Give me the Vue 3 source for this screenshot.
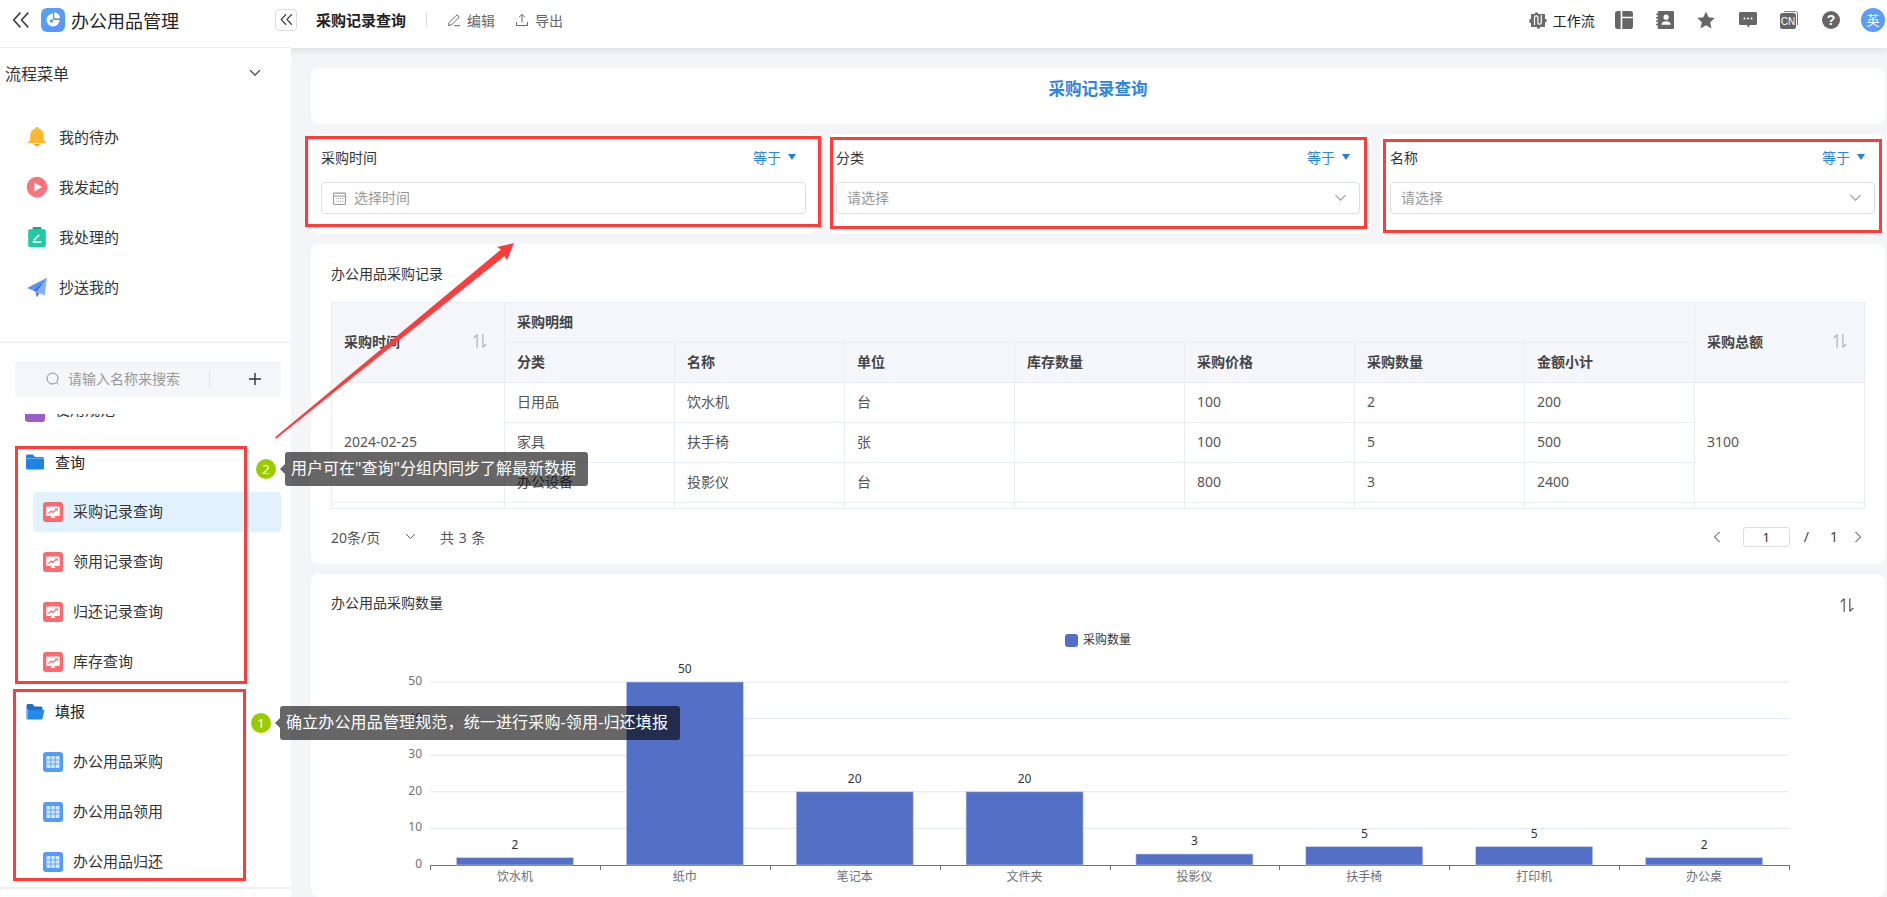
<script setup>
const menu = [
  { icon: 'i-bell', label: '我的待办' },
  { icon: 'i-play', label: '我发起的' },
  { icon: 'i-clip', label: '我处理的' },
  { icon: 'i-plane', label: '抄送我的' },
]
const queryItems = ['采购记录查询', '领用记录查询', '归还记录查询', '库存查询']
const fillItems = ['办公用品采购', '办公用品领用', '办公用品归还']
const topIcons = ['t-layout', 't-book', 't-star', 't-chat', 't-cn', 't-help']
const filters = [
  { label: '采购时间', placeholder: '选择时间', kind: 'date', cls: 'f-side' },
  { label: '分类', placeholder: '请选择', kind: 'select', cls: 'f-mid' },
  { label: '名称', placeholder: '请选择', kind: 'select', cls: 'f-side' },
]
const subHeads = ['分类', '名称', '单位', '库存数量', '采购价格', '采购数量', '金额小计']
const rows = [
  ['日用品', '饮水机', '台', '', '100', '2', '200'],
  ['家具', '扶手椅', '张', '', '100', '5', '500'],
  ['办公设备', '投影仪', '台', '', '800', '3', '2400'],
]
const y0 = 865
const unit = 183 / 50
const ticks = [0, 10, 20, 30, 40, 50].map((v) => ({ v, y: y0 - v * unit }))
const names = [
  ['饮水机', 2], ['纸巾', 50], ['笔记本', 20], ['文件夹', 20],
  ['投影仪', 3], ['扶手椅', 5], ['打印机', 5], ['办公桌', 2],
]
const step = 1359 / 8
const bars = names.map(([name, v], i) => ({
  name, v, cx: 430 + step * (i + 0.5), top: y0 - v * unit, h: v * unit,
}))
const tickX = Array.from({ length: 9 }, (_, i) => Math.round(430 + step * i) + 0.5)
</script>

<template>
  <div class="page">
    <svg class="defs" aria-hidden="true">
      <symbol id="i-bell" viewBox="0 0 20 20">
        <path fill="#fdb82e" d="M10 .8c.9 0 1.500.6 1.600 1.500 2.900.7 4.600 3.200 4.600 6.200v4.300l2.400 2.700H1.400l2.400-2.700V8.500c0-3 1.700-5.500 4.600-6.200C8.500 1.400 9.100.8 10 .8z"/>
        <path fill="#f59a23" d="M7.400 16.300h5.200a2.700 2.700 0 0 1-5.200 0z"/>
      </symbol>
      <symbol id="i-play" viewBox="0 0 20 20">
        <circle cx="10" cy="10" r="9.400" fill="#f9747c"/>
        <path fill="#fff" d="M7.600 5.800l7 4.200-7 4.200z"/>
      </symbol>
      <symbol id="i-clip" viewBox="0 0 20 20">
        <rect x="6" y="1" width="8" height="4" rx="1" fill="#14a888"/>
        <rect x="2" y="3" width="16" height="16" rx="1.500" fill="#1ecba2"/>
        <path stroke="#fff" stroke-width="1.500" fill="none" d="M6 14.500h8M7 13l5-5"/>
      </symbol>
      <symbol id="i-plane" viewBox="0 0 20 20">
        <path fill="#5a93f5" d="M19 1.500L1 11l5 2z"/>
        <path fill="#3d7bea" d="M19 1.500L6 13l4 1.800z"/>
        <path fill="#7fb0fa" d="M19 1.500l-2 16-7-2.700z"/>
        <path fill="#3d7bea" d="M8.500 14.500l1.500 5 2-3.800z"/>
      </symbol>
      <symbol id="i-folder" viewBox="0 0 20 20">
        <path fill="#1e83e4" d="M1 4a1.500 1.500 0 0 1 1.500-1.500h5.300L10 5h7.500A1.500 1.500 0 0 1 19 6.500V16a1.500 1.500 0 0 1-1.500 1.500h-15A1.500 1.500 0 0 1 1 16z"/>
        <path fill="#7dbcf5" d="M1 6.300h18v.7H1z"/>
      </symbol>
      <symbol id="i-open" viewBox="0 0 20 20">
        <path fill="#1e6fc8" d="M1.500 3.500A1.500 1.500 0 0 1 3 2h4.500l2 2.500H16A1.500 1.500 0 0 1 17.500 6v2H1.500z"/>
        <path fill="#2588ea" d="M1 8h18.500L17.500 16.500a1.500 1.500 0 0 1-1.500 1H3a1.500 1.500 0 0 1-1.500-1.300z"/>
        <path fill="#9ccdf8" d="M1.500 7.300L1 18l1.300-.5.600-10.200z"/>
      </symbol>
      <symbol id="i-report" viewBox="0 0 20 20">
        <rect width="20" height="20" rx="3" fill="#fb6a6e"/>
        <path fill="#fff" d="M4 4.500h12a.7.700 0 0 1 .7.700v8a.7.700 0 0 1-.7.700h-4.500v1.200l1.500.9H7l1.500-.9v-1.200H4a.7.700 0 0 1-.7-.700v-8A.7.700 0 0 1 4 4.500z"/>
        <path fill="none" stroke="#fb6a6e" stroke-width="1.300" d="M5.500 11.500l2.800-2.400 1.700 1.300 3.500-3.300"/>
        <path fill="#fb6a6e" d="M11.800 6.600h3v3z"/>
      </symbol>
      <symbol id="i-table" viewBox="0 0 20 20">
        <rect width="20" height="20" rx="3" fill="#559bf8"/>
        <rect x="3.500" y="4" width="13" height="12" rx="1" fill="#d9e9ff"/>
        <path stroke="#559bf8" stroke-width=".9" d="M3.500 8h13M3.500 12h13M7.800 4v12M12.200 4v12"/>
      </symbol>
      <symbol id="i-sort" viewBox="0 0 14 14">
        <path fill="none" stroke="currentColor" stroke-width="1" d="M4.500 13V1.500M1.500 4.500l3-3M9.500 1v11.500M12.500 9.500l-3 3"/>
      </symbol>
      <symbol id="i-chev-down" viewBox="0 0 12 8">
        <path fill="none" stroke="currentColor" stroke-width="1.100" d="M1 1.200l5 5 5-5"/>
      </symbol>
      <symbol id="i-double" viewBox="0 0 16 16">
        <path fill="none" stroke="currentColor" stroke-width="1.500" d="M7.500 1.500L1.500 8l6 6.500M14.500 1.500L8.500 8l6 6.500"/>
      </symbol>
      <symbol id="t-flow" viewBox="0 0 18 18">
        <path fill="#6a6a6a" d="M2 3h4V1.500h3V3h7v5h1.500v3H16v5h-5v1.500H8V16H2v-4H.5V8H2z"/>
        <path fill="none" stroke="#fff" stroke-width="1.200" d="M5.500 14V6.500a1.700 1.700 0 0 1 3.400 0v5a1.700 1.700 0 0 0 3.400 0V4"/>
      </symbol>
      <symbol id="t-layout" viewBox="0 0 16 16">
        <path fill="#666" d="M0 2.500A2.500 2.500 0 0 1 2.500 0H5v16H2.500A2.500 2.500 0 0 1 0 13.500z"/>
        <path fill="#666" d="M6.500 0h7A2.500 2.500 0 0 1 16 2.500V5H6.500zM6.500 6.500H16v7a2.500 2.500 0 0 1-2.500 2.500h-7z"/>
      </symbol>
      <symbol id="t-book" viewBox="0 0 16 16">
        <rect x="1.500" width="14.500" height="16" rx="1" fill="#666"/>
        <path stroke="#666" stroke-width="1.200" d="M0 3h2.500M0 6h2.500M0 9h2.500M0 12h2.500"/>
        <circle cx="9" cy="5.500" r="2.300" fill="#fff"/>
        <path fill="#fff" d="M4.800 12.200c.2-2.300 2-3.200 4.200-3.200s4 .9 4.200 3.200z"/>
      </symbol>
      <symbol id="t-star" viewBox="0 0 18 18">
        <path fill="#666" d="M9 .6l2.600 5.700 6.200.7-4.600 4.200 1.300 6.200L9 14.300l-5.500 3.100 1.300-6.200L.2 7l6.200-.7z"/>
      </symbol>
      <symbol id="t-chat" viewBox="0 0 18 16">
        <path fill="#666" d="M1.500 0h15A1.500 1.500 0 0 1 18 1.500v10a1.500 1.500 0 0 1-1.500 1.500H11l-1.800 2.500L8 13H1.500A1.500 1.500 0 0 1 0 11.500v-10A1.500 1.500 0 0 1 1.500 0z"/>
        <circle cx="5.500" cy="6.500" r="1" fill="#fff"/><circle cx="9" cy="6.500" r="1" fill="#fff"/><circle cx="12.500" cy="6.500" r="1" fill="#fff"/>
      </symbol>
      <symbol id="t-cn" viewBox="0 0 18 18">
        <path fill="none" stroke="#777" stroke-width="1" d="M4 .6h11.500a2 2 0 0 1 2 2V14"/>
        <rect y="2" width="16" height="16" rx="2.500" fill="#666"/>
        <text x="8" y="14" text-anchor="middle" fill="#fff" font-size="10" font-family="Liberation Sans, sans-serif">CN</text>
      </symbol>
      <symbol id="t-help" viewBox="0 0 18 18">
        <circle cx="9" cy="9" r="9" fill="#666"/>
        <text x="9" y="14" text-anchor="middle" fill="#fff" font-size="14" font-weight="700" font-family="Liberation Sans, sans-serif">?</text>
      </symbol>
    </svg>

    <header class="top">
      <div class="brand">
        <svg class="back"><use href="#i-double" /></svg>
        <span class="logo">
          <svg viewBox="0 0 24 24" width="24" height="24">
            <path fill="#fff" d="M12 5.500a6.500 6.500 0 1 0 6.500 6.500H12z"/>
            <path fill="#fff" d="M13.300 4.300a6.500 6.500 0 0 1 6 6h-6z"/>
            <circle cx="10.500" cy="13" r="1.800" fill="#5aa0f8"/>
          </svg>
        </span>
        <span class="app-name">办公用品管理</span>
      </div>
      <button class="collapse"><svg class="collapse-ic"><use href="#i-double" /></svg></button>
      <span class="crumb">采购记录查询</span>
      <span class="vline"></span>
      <span class="act act-edit">
        <svg viewBox="0 0 14 14" class="act-ic"><path fill="none" stroke="#666" stroke-width="1" d="M1.500 12.500l.6-3 7-7a1.200 1.200 0 0 1 1.800 0l.6.600a1.200 1.200 0 0 1 0 1.800l-7 7zM7 12.700h6"/></svg>
        编辑
      </span>
      <span class="act act-out">
        <svg viewBox="0 0 14 14" class="act-ic"><path fill="none" stroke="#666" stroke-width="1" d="M7 9.500V1.500M4 4.300l3-3 3 3M1.500 9v3.500h11V9"/></svg>
        导出
      </span>
      <div class="top-right">
        <span class="flow"><svg class="flow-ic"><use href="#t-flow" /></svg>工作流</span>
        <svg v-for="t in topIcons" :key="t" class="top-ic"><use :href="'#' + t" /></svg>
        <span class="avatar">英</span>
      </div>
    </header>

    <div class="body">
      <aside class="side">
        <div class="flow-head">
          <span>流程菜单</span>
          <svg class="flow-chev"><use href="#i-chev-down" /></svg>
        </div>
        <ul class="menu">
          <li v-for="m in menu" :key="m.label" class="menu-row">
            <svg class="menu-ic"><use :href="'#' + m.icon" /></svg>{{ m.label }}
          </li>
        </ul>
        <div class="search">
          <svg viewBox="0 0 14 14" class="search-ic"><circle cx="6.500" cy="6.500" r="5.500" fill="none" stroke="#888"/><path stroke="#888" d="M10.500 10.500l2 2"/></svg>
          <span class="search-text">请输入名称来搜索</span>
          <span class="search-sep"></span>
          <svg viewBox="0 0 14 14" class="search-plus"><path stroke="#333" stroke-width="1.400" d="M7 1v12M1 7h12"/></svg>
        </div>
        <div class="tree">
          <div class="group-row partial">
            <span class="purple"></span><span class="partial-text">使用规范</span>
          </div>
          <div class="group-row">
            <svg class="folder-ic"><use href="#i-folder" /></svg>查询
          </div>
          <div v-for="(q, i) in queryItems" :key="q" class="leaf" :class="{ active: i === 0 }">
            <svg class="leaf-ic"><use href="#i-report" /></svg>{{ q }}
          </div>
          <div class="group-row group-lift">
            <svg class="folder-ic"><use href="#i-open" /></svg>填报
          </div>
          <div v-for="f in fillItems" :key="f" class="leaf">
            <svg class="leaf-ic"><use href="#i-table" /></svg>{{ f }}
          </div>
        </div>
      </aside>

      <main class="main">
        <section class="card title-card">采购记录查询</section>

        <div class="filters">
          <section v-for="f in filters" :key="f.label" class="card filter" :class="f.cls">
            <div class="filter-head">
              <span>{{ f.label }}</span>
              <span class="eq">等于<i class="tri"></i></span>
            </div>
            <div class="input" :class="f.kind">
              <svg v-if="f.kind === 'date'" viewBox="0 0 12 12" class="cal">
                <rect x=".5" y="1" width="11" height="10.500" rx=".8" fill="none" stroke="#999"/>
                <path stroke="#999" d="M.5 3.800h11"/>
                <path stroke="#999" stroke-dasharray="1 1" d="M2.500 6h7M2.500 8.500h7"/>
              </svg>
              <span class="ph">{{ f.placeholder }}</span>
              <svg v-if="f.kind === 'select'" class="sel-chev"><use href="#i-chev-down" /></svg>
            </div>
          </section>
        </div>

        <section class="card table-card">
          <div class="card-title">办公用品采购记录</div>
          <div class="table-clip">
            <table class="grid">
              <colgroup>
                <col class="c-first" />
                <col v-for="n in 8" :key="n" class="c-norm" />
              </colgroup>
              <thead>
                <tr>
                  <th rowspan="2"><div class="th-sort">采购时间<svg class="sort"><use href="#i-sort" /></svg></div></th>
                  <th colspan="7">采购明细</th>
                  <th rowspan="2"><div class="th-sort">采购总额<svg class="sort"><use href="#i-sort" /></svg></div></th>
                </tr>
                <tr>
                  <th v-for="h in subHeads" :key="h">{{ h }}</th>
                </tr>
              </thead>
              <tbody>
                <tr v-for="(r, i) in rows" :key="i">
                  <td v-if="i === 0" rowspan="3">2024-02-25</td>
                  <td v-for="(c, j) in r" :key="j">{{ c }}</td>
                  <td v-if="i === 0" rowspan="3">3100</td>
                </tr>
                <tr><td v-for="n in 9" :key="n"></td></tr>
              </tbody>
            </table>
          </div>
          <div class="pager">
            <span class="pg-size">20条/页</span>
            <svg class="pg-chev"><use href="#i-chev-down" /></svg>
            <span class="pg-total">共 3 条</span>
            <span class="pg-right">
              <svg viewBox="0 0 8 12" class="pg-nav"><path fill="none" stroke="#333" d="M6.500 1L1.500 6l5 5"/></svg>
              <span class="pg-input">1</span>
              <span class="pg-slash">/</span>
              <span class="pg-num">1</span>
              <svg viewBox="0 0 8 12" class="pg-nav"><path fill="none" stroke="#333" d="M1.500 1l5 5-5 5"/></svg>
            </span>
          </div>
        </section>

        <section class="card chart-card">
          <div class="chart-head">
            <div class="card-title">办公用品采购数量</div>
            <svg class="chart-sort"><use href="#i-sort" /></svg>
          </div>
          <svg class="chart" viewBox="311 620 1574 277" width="1574" height="277">
            <rect x="1065" y="634" width="13" height="13" rx="3" fill="#546fc6"/>
            <text x="1083" y="644" class="t-leg">采购数量</text>
            <g v-for="t in ticks" :key="t.v">
              <line v-if="t.v" x1="430" x2="1789" :y1="t.y" :y2="t.y" stroke="#e0e6f1"/>
              <text x="422" :y="t.y + 3" text-anchor="end" class="t-axis">{{ t.v }}</text>
            </g>
            <line x1="430" x2="1789" :y1="y0 + .5" :y2="y0 + .5" stroke="#6e7079"/>
            <line v-for="x in tickX" :key="x" :x1="x" :x2="x" :y1="y0" :y2="y0 + 5" stroke="#6e7079"/>
            <g v-for="b in bars" :key="b.name">
              <rect :x="b.cx - 58.500" :y="b.top" width="117" :height="b.h" fill="#546fc6" stroke="#c5d0ee" stroke-width=".6"/>
              <text :x="b.cx" :y="b.top - 9" text-anchor="middle" class="t-val">{{ b.v }}</text>
              <text :x="b.cx" y="881" text-anchor="middle" class="t-axis">{{ b.name }}</text>
            </g>
          </svg>
        </section>
      </main>
    </div>

    <span class="rbox rb1"></span>
    <span class="rbox rb2"></span>
    <span class="rbox rb3"></span>
    <span class="rbox rb4"></span>
    <span class="rbox rb5"></span>

    <svg class="arrow" viewBox="0 0 1887 897" width="1887" height="897">
      <path fill="#ff3b3b" d="M275 437.300L501 249.500 497 247 514 243 507 260 504.500 256 276 438.800z"/>
    </svg>

    <div class="tip tip2"><span class="badge">2</span><span class="tip-box">用户可在"查询"分组内同步了解最新数据</span></div>
    <div class="tip tip1"><span class="badge">1</span><span class="tip-box">确立办公用品管理规范，统一进行采购-领用-归还填报</span></div>
  </div>
</template>

<style scoped>
.page {
  position: relative;
  width: 1887px;
  height: 897px;
  overflow: hidden;
  display: flex;
  flex-direction: column;
  background: #f4f5f7;
  font-family: "Noto Sans", "Noto Sans CJK SC", sans-serif;
  font-size: 14px;
  color: #333;
}
.defs { position: absolute; width: 0; height: 0; }

/* header */
.top {
  position: relative;
  z-index: 1;
  flex: 0 0 48px;
  height: 48px;
  padding-bottom: 9px;
  box-sizing: border-box;
  background: #fff;
  box-shadow: 0 2px 8px rgba(0, 0, 0, .1);
  display: flex;
  align-items: center;
}
.brand { display: flex; align-items: center; width: 275px; padding-left: 12px; box-sizing: border-box; }
.back { width: 18px; height: 18px; color: #444; }
.logo {
  width: 24px; height: 24px; margin-left: 11px; border-radius: 6px;
  background: linear-gradient(135deg, #53a5fb, #5a93f6);
  display: block;
}
.logo svg { display: block; }
.app-name { margin-left: 6px; font-size: 18px; color: #222; }
.collapse {
  width: 22px; height: 22px; padding: 0; background: #fff;
  border: 1px solid #dcdcdc; border-radius: 4px;
  display: flex; align-items: center; justify-content: center;
}
.collapse-ic { width: 13px; height: 13px; color: #444; }
.crumb { margin-left: 19px; font-size: 15px; font-weight: 700; color: #222; line-height: 20px; width: 110px; }
.vline { width: 1px; height: 15px; background: #ddd; }
.act { display: flex; align-items: center; color: #666; font-size: 14px; margin-left: 14px; }
.act-edit { margin-left: 20px; }
.act-out { margin-left: 20px; }
.act-ic { width: 14px; height: 14px; margin-right: 6px; }
.top-right { margin-left: auto; display: flex; align-items: center; padding-right: 2px; }
.flow { display: flex; align-items: center; font-size: 14px; color: #222; margin-right: 20px; }
.flow-ic { width: 18px; height: 18px; margin-right: 6px; }
.top-ic { width: 18px; height: 18px; margin-right: 23.400px; }
.avatar {
  width: 24px; height: 24px; margin-left: -2px; border-radius: 50%;
  background: #5a9ff5; color: #fff; font-size: 13px;
  display: flex; align-items: center; justify-content: center;
}

/* sidebar */
.body { flex: 1; display: flex; min-height: 0; }
.side {
  position: relative;
  z-index: 2;
  flex: 0 0 291px;
  background: #fff;
  border-top: 1px solid #e9edf7;
  margin-top: -1px;
  display: flex;
  flex-direction: column;
  color: #333;
}
.flow-head {
  height: 50px; padding: 0 30px 0 5px;
  display: flex; align-items: center; justify-content: space-between;
  font-size: 16px; color: #333;
}
.flow-chev { width: 12px; height: 8px; color: #333; }
.menu {
  list-style: none; margin: 0; padding: 14px 0 30px;
  border-bottom: 1px solid #e9ebf0;
}
.menu-row { height: 50px; box-sizing: border-box; padding: 0 0 2px 26px; display: flex; align-items: center; font-size: 15px; }
.menu-ic { width: 22px; height: 22px; margin: 2px 11px 0 0; }
.search {
  margin: 18px 10px 0 15px; height: 36px; border-radius: 4px; background: #f5f6fa;
  display: flex; align-items: center; padding-left: 31px; flex: none;
}
.search-ic { width: 14px; height: 14px; margin-right: 8px; }
.search-text { color: #999; font-size: 14px; width: 141px; padding-bottom: 2px; }
.search-sep { width: 1px; height: 16px; background: #e0e2e8; margin-right: 38px; }
.search-plus { width: 14px; height: 14px; }
.tree {
  margin-top: 17px; height: 473px; overflow: hidden; border-bottom: 2px solid #eeeff2;
  flex: none; padding-right: 10px; display: flex; flex-direction: column;
}
.group-row {
  flex: none; height: 50px; box-sizing: border-box; padding: 0 0 2px 25px;
  display: flex; align-items: center; font-size: 15px; color: #222;
}
.group-lift { padding-bottom: 4px; }
.group-lift .folder-ic { margin-top: 4px; }
.partial { margin-top: -27px; color: #333; }
.partial-text { margin-bottom: 6px; }
.purple { width: 20px; height: 20px; background: #9b5dc8; border-radius: 3px; margin: 2px 10px 0 0; flex: none; }
.folder-ic { width: 20px; height: 20px; margin: 2px 10px 0 0; flex: none; }
.leaf {
  flex: none; height: 40px; margin: 5px 0 5px 33px; box-sizing: border-box; padding: 0 0 4px 10px;
  display: flex; align-items: center; border-radius: 4px; font-size: 15px; color: #333;
}
.leaf.active { background: #e1f2fd; }
.leaf-ic { width: 20px; height: 20px; margin: 4px 10px 0 0; flex: none; }

/* main */
.main {
  flex: 1; min-width: 0; padding: 20px 2px 0 20px;
  display: flex; flex-direction: column; gap: 10px;
}
.card { background: #fff; border-radius: 8px; }
.title-card {
  height: 56px; flex: none; display: flex; align-items: center; justify-content: center;
  color: #2b85e4; font-size: 16.500px; font-weight: 700; padding-bottom: 16px; box-sizing: border-box;
}
.filters { display: grid; grid-template-columns: 505px 544px 505px; gap: 10px; flex: none; }
.filter { height: 100px; padding: 10px 10px 0; box-sizing: border-box; }
.filter-head {
  height: 28px; padding: 0 10px 2px 0; box-sizing: border-box; display: flex; align-items: center; justify-content: space-between;
  color: #333; font-size: 14px;
}
.eq { color: #2b85e4; display: flex; align-items: center; }
.tri {
  width: 0; height: 0; margin-left: 7px;
  border-left: 4.500px solid transparent; border-right: 4.500px solid transparent;
  border-top: 6px solid #1e83e4;
}
.input {
  margin-top: 10px; height: 32px; box-sizing: border-box;
  border: 1px solid #dcdee6; border-radius: 4px;
  display: flex; align-items: center; padding: 0 12px 0 10px;
}
.cal { width: 13px; height: 13px; margin: 0 8px 0 1px; }
.ph { color: #999; flex: 1; padding-bottom: 3px; }
.sel-chev { width: 13px; height: 8px; color: #999; }

.table-card { height: 320px; flex: none; padding: 20px 20px 0; box-sizing: border-box; }
.card-title { font-size: 14px; line-height: 20px; color: #333; padding-bottom: 1px; margin-bottom: -1px; }
.table-clip {
  margin-top: 18px; height: 207px; width: 1534px; overflow: hidden;
  border-bottom: 1px solid #ebedf5; box-sizing: border-box;
}
.grid { width: 1533px; table-layout: fixed; border-collapse: collapse; font-size: 14px; }
.c-first { width: 173px; }
.c-norm { width: 170px; }
.grid th, .grid td {
  height: 40px; box-sizing: border-box; padding: 0 12px 3px;
  border: 1px solid #ebedf5; text-align: left; vertical-align: middle;
}
.grid th { background: #f5f6fa; color: #444; font-weight: 700; font-size: 14px; }
.grid td { color: #555; background: #fff; }
.th-sort { display: flex; align-items: center; justify-content: space-between; padding-right: 4px; }
.sort { width: 16px; height: 16px; color: #aaa; }

.pager { height: 55px; display: flex; align-items: center; color: #555; font-size: 14px; }
.pg-size { width: 74px; }
.pg-chev { width: 11px; height: 7px; color: #555; }
.pg-total { margin-left: 24px; word-spacing: 1px; }
.pg-right { margin-left: auto; display: flex; align-items: center; color: #444; }
.pg-nav { width: 8px; height: 12px; }
.pg-input {
  margin-left: 22px; width: 47px; height: 20px; box-sizing: border-box;
  border: 1px solid #dcdee6; border-radius: 3px; text-align: center; line-height: 18px; color: #333; font-size: 13px;
}
.pg-slash { margin-left: 14px; }
.pg-num { margin-left: 21px; }
.pg-num + .pg-nav { margin-left: 16px; margin-right: 3px; }

.chart-card { flex: 1; overflow: hidden; padding-top: 19px; box-sizing: border-box; min-height: 0; }
.chart-head { display: flex; align-items: center; justify-content: space-between; padding: 0 30px 0 20px; height: 20px; }
.chart-sort { width: 16px; height: 16px; color: #444; margin-top: 3px; }
.chart { display: block; margin-top: 7px; }
.t-leg { font-size: 12px; fill: #333; }
.t-axis { font-size: 12px; fill: #6e7079; }
.t-val { font-size: 12px; fill: #333; }

/* annotations */
.rbox { position: absolute; z-index: 4; box-sizing: border-box; border: 3px solid #ff3b3b; }
.rb1 { left: 305px; top: 136px; width: 516px; height: 91px; }
.rb2 { left: 830px; top: 137px; width: 537px; height: 92px; }
.rb3 { left: 1383px; top: 139px; width: 499px; height: 94px; }
.rb4 { left: 15px; top: 446px; width: 232px; height: 238px; }
.rb5 { left: 13px; top: 689px; width: 233px; height: 192px; }
.arrow { position: absolute; left: 0; top: 0; z-index: 5; pointer-events: none; }
.tip { position: absolute; z-index: 6; display: flex; align-items: center; height: 34px; }
.tip1 { left: 251px; top: 706px; }
.tip2 { left: 256px; top: 452px; }
.badge {
  width: 20px; height: 20px; border-radius: 50%; background: #99cc00; color: #fff;
  font-size: 13px; display: flex; align-items: center; justify-content: center;
}
.tip-box {
  position: relative; margin-left: 9px; height: 34px; line-height: 33px; padding: 0 12px 0 6px;
  background: rgba(0, 0, 0, .6); color: #fff; font-size: 16px; border-radius: 3px; white-space: nowrap;
}
.tip1 .tip-box { letter-spacing: .15px; }
.tip-box::before {
  content: ""; position: absolute; left: -5px; top: 12px; width: 0; height: 0;
  border-top: 5px solid transparent; border-bottom: 5px solid transparent;
  border-right: 5px solid rgba(0, 0, 0, .6);
}
</style>
